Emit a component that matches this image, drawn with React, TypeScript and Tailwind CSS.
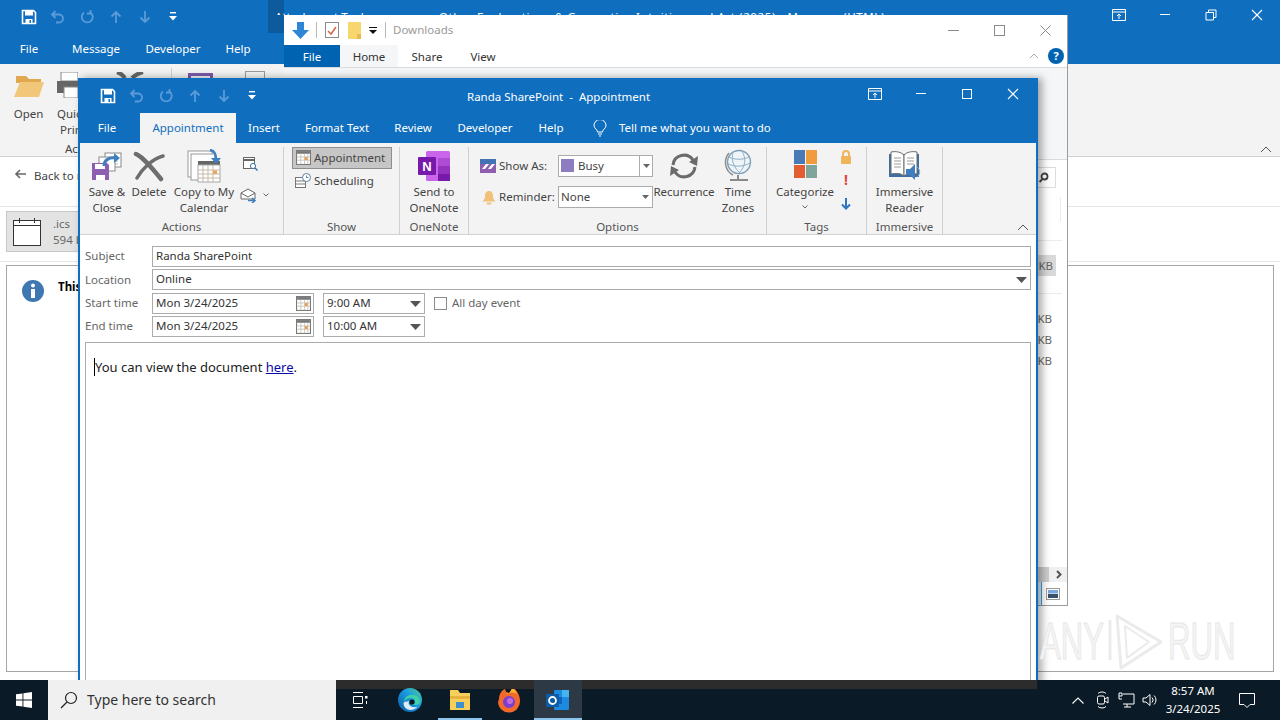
import type { ReactNode } from "react";

const BLUE = "bg-[#106ebe]";

function SaveIcon() {
  return (
    <svg width="16" height="16" viewBox="0 0 16 16">
      <path d="M1.5 1.5h11l2 2v11h-13z" fill="none" stroke="#fff" strokeWidth="1.6" />
      <rect x="4" y="2" width="8" height="4.5" fill="#fff" />
      <rect x="4.5" y="10" width="7" height="4.5" fill="#fff" />
      <rect x="8.5" y="11" width="1.5" height="3" fill="#106ebe" />
    </svg>
  );
}

function QuickAccess() {
  const faded = "#5a9bd8";
  return (
    <div className="flex items-center">
      <span className="flex w-[29px] justify-center"><SaveIcon /></span>
      <span className="flex w-[29px] justify-center">
        <svg width="16" height="16" viewBox="0 0 16 16" fill="none" stroke={faded} strokeWidth="1.8">
          <path d="M5.5 2 2 5.5 5.5 9M2 5.5h7a4 4 0 0 1 4 4 4 4 0 0 1-4 4H6" />
        </svg>
      </span>
      <span className="flex w-[29px] justify-center">
        <svg width="16" height="16" viewBox="0 0 16 16" fill="none" stroke={faded} strokeWidth="1.8">
          <path d="M11.5 3.5a5.5 5.5 0 1 1-6.5 0M11.5 1v3.5H8" />
        </svg>
      </span>
      <span className="flex w-[29px] justify-center">
        <svg width="14" height="14" viewBox="0 0 14 14" fill="none" stroke={faded} strokeWidth="1.8">
          <path d="M7 13V2M2.5 6.5 7 2l4.5 4.5" />
        </svg>
      </span>
      <span className="flex w-[29px] justify-center">
        <svg width="14" height="14" viewBox="0 0 14 14" fill="none" stroke={faded} strokeWidth="1.8">
          <path d="M7 1v11M2.5 7.5 7 12l4.5-4.5" />
        </svg>
      </span>
      <span className="flex w-[28px] justify-center">
        <svg width="8" height="9" viewBox="0 0 8 9" fill="#fff">
          <rect x="1" y="0" width="6" height="1.4" />
          <path d="M0 4h8L4 8.5z" />
        </svg>
      </span>
    </div>
  );
}

function WindowButtons({ max }: { max: "square" | "restore" }) {
  return (
    <div className="flex items-center">
      <span className="flex w-[46px] justify-center">
        <svg width="14" height="12" viewBox="0 0 14 12" fill="none" stroke="#fff" strokeWidth="1">
          <path d="M.5.5h13v11H.5zM.5 3h13M7 10V5M5 7l2-2 2 2" />
        </svg>
      </span>
      <span className="flex w-[46px] justify-center">
        <svg width="12" height="12" viewBox="0 0 12 12" stroke="#fff"><path d="M1 5.500h10" /></svg>
      </span>
      <span className="flex w-[46px] justify-center">
        {max === "square" ? (
          <svg width="12" height="12" viewBox="0 0 12 12" fill="none" stroke="#fff"><rect x="1.5" y="1.5" width="9" height="9" /></svg>
        ) : (
          <svg width="12" height="12" viewBox="0 0 12 12" fill="none" stroke="#fff"><path d="M1 3.5h7.5V11H1zM3.5 3.5V1H11v7.5H8.5" /></svg>
        )}
      </span>
      <span className="flex w-[46px] justify-center">
        <svg width="12" height="12" viewBox="0 0 12 12" stroke="#fff" strokeWidth="1.1"><path d="m1 1 10 10M11 1 1 11" /></svg>
      </span>
    </div>
  );
}

function CalendarGrid({ size = 14 }: { size?: number }) {
  return (
    <svg width={size} height={size} viewBox="0 0 14 14">
      <rect x=".5" y=".5" width="13" height="13" fill="#fff" stroke="#7a7a7a" />
      <rect x="1" y="1" width="12" height="2.5" fill="#777" />
      <path d="M1 6.5h12M1 9.5h12M4.5 4v9M8 4v9M11 4v9" stroke="#c9c0b5" strokeWidth=".8" />
      <rect x="8.2" y="6.7" width="2.6" height="2.6" fill="#e89a4c" />
    </svg>
  );
}

function BigButton({ icon, lines, width }: { icon: ReactNode; lines: string[]; width: string }) {
  return (
    <div className={`flex flex-col items-center ${width}`}>
      <div className="flex h-[37px] items-center justify-center">{icon}</div>
      {lines.map((l) => (
        <span key={l} className="whitespace-nowrap text-[11.5px] leading-[16px]">{l}</span>
      ))}
    </div>
  );
}

function Group({ label, width, children }: { label: string; width: string; children: ReactNode }) {
  return (
    <div className={`flex h-[88px] shrink-0 flex-col border-r border-[#cfcfcf] ${width}`}>
      <div className="h-[71px] flex-1">{children}</div>
      <div className="text-center text-[11.5px] leading-[16px] text-[#555]">{label}</div>
    </div>
  );
}

function SaveCloseIcon() {
  return (
    <svg width="32" height="32" viewBox="0 0 32 32">
      <rect x="14" y="3" width="16" height="14" fill="#fff" stroke="#8a8a8a" />
      <path d="M17 11h10M17 14h10" stroke="#bbb" />
      <rect x="8" y="7" width="16" height="14" fill="#fff" stroke="#8a8a8a" />
      <path d="M1 13h15l2 2v15H1z" fill="#8e5fb0" />
      <rect x="5" y="25" width="9" height="5" fill="#fff" />
      <rect x="4" y="14" width="10" height="5" fill="#fff" />
      <path d="M13 16c0-6 5-9 12-8" fill="none" stroke="#3f7fc0" strokeWidth="3" />
      <path d="m23 3 6 5-6 5z" fill="#3f7fc0" />
    </svg>
  );
}

function DeleteIcon() {
  return (
    <svg width="32" height="32" viewBox="0 0 32 32" fill="none" stroke="#6d6d6d" strokeLinecap="round">
      <path d="M3 4c7 3 16 14 25 25" strokeWidth="4.5" />
      <path d="M30 6C19 9 9 19 4 28" strokeWidth="3.5" />
    </svg>
  );
}

function CopyCalendarIcon() {
  return (
    <svg width="34" height="34" viewBox="0 0 34 34">
      <rect x="1" y="2" width="24" height="26" fill="#fff" stroke="#9a9a9a" />
      <rect x="4" y="5" width="24" height="26" fill="#fff" stroke="#9a9a9a" />
      <rect x="11" y="12" width="22" height="4" fill="#666" />
      <rect x="11" y="16" width="22" height="17" fill="#fff" stroke="#a8a8a8" />
      <path d="M11 21h22M11 25h22M11 29h22M16 16v17M21 16v17M26 16v17" stroke="#c7b9a8" />
      <rect x="26" y="21.5" width="4" height="3.5" fill="#eca35c" />
      <path d="M23 1c5 1 6 4 6 9" fill="none" stroke="#3f7fc0" strokeWidth="2.6" />
      <path d="m24 9 5 6 5-6z" fill="#3f7fc0" />
    </svg>
  );
}

function OneNoteIcon() {
  return (
    <svg width="33" height="32" viewBox="0 0 33 32">
      <rect x="8" y="1" width="24" height="30" rx="1.5" fill="#ca64ea" />
      <rect x="20" y="8" width="12" height="8" fill="#ae4bd5" />
      <rect x="20" y="16" width="12" height="8" fill="#9332bf" />
      <rect x="20" y="24" width="12" height="7" fill="#7719aa" />
      <rect x="0" y="7" width="18" height="18" rx="1" fill="#7719aa" />
      <text x="9" y="21" textAnchor="middle" fill="#fff" fontSize="13" fontWeight="700" fontFamily="Liberation Sans, sans-serif">N</text>
    </svg>
  );
}

function GlobeIcon() {
  return (
    <svg width="28" height="34" viewBox="0 0 28 34" fill="none">
      <circle cx="15" cy="13" r="11.5" fill="#eef4f8" stroke="#7d9db5" strokeWidth="1.4" />
      <path d="M5 8c6 3 14 3 20 0M4 15c7 3 15 3 22-1M9 3c-2 7 0 15 7 21M18 2c4 7 4 14-2 21" stroke="#8fb0c6" />
      <path d="M5 4C-1 11 1 22 9 26" stroke="#8a8a8a" strokeWidth="1.4" />
      <path d="M14 26v4M6 31h18" stroke="#8a8a8a" strokeWidth="2" />
    </svg>
  );
}

function RecurrenceIcon() {
  return (
    <svg width="32" height="32" viewBox="0 0 32 32" fill="none" stroke="#6b6b6b" strokeWidth="3">
      <path d="M5 15a11 11 0 0 1 20-5" />
      <path d="M27 17a11 11 0 0 1-20 5" />
      <path d="m30 6-1 10-8-4z" fill="#6b6b6b" stroke="none" />
      <path d="m2 26 1-10 8 4z" fill="#6b6b6b" stroke="none" />
    </svg>
  );
}

function BookIcon() {
  return (
    <svg width="33" height="31" viewBox="0 0 33 31">
      <path d="M1 4h30v23H1z" fill="#3f6f9f" />
      <path d="M3 2c5-1 10 0 13 3v21c-3-3-8-3-13-2z" fill="#fff" stroke="#6a6a6a" />
      <path d="M29 2c-5-1-10 0-13 3v21c3-3 8-3 13-2z" fill="#fff" stroke="#6a6a6a" />
      <path d="M6 8h7M6 11h7M6 14h7M6 17h7M19 8h7M19 11h7M19 14h7" stroke="#9a9a9a" />
      <path d="M18 19h4l5-5v16l-5-5h-4z" fill="#3f7fc0" />
      <path d="M29 17a6 6 0 0 1 0 10" fill="none" stroke="#7aa5cf" />
    </svg>
  );
}

function Select({ children, boxed }: { children: ReactNode; boxed?: boolean }) {
  return (
    <div className="flex h-[22px] w-[95px] items-center border border-[#ababab] bg-white text-[11.5px]">
      <div className="flex flex-1 items-center gap-[4px] pb-[1px] pl-[2px]">{children}</div>
      <div className={`flex h-full w-[13px] items-center justify-center ${boxed ? "border-l border-[#ababab]" : ""}`}>
        <svg width="7" height="4" viewBox="0 0 7 4" fill="#666"><path d="M0 0h7L3.5 4z" /></svg>
      </div>
    </div>
  );
}

function AppointmentRibbon() {
  return (
    <div className="relative flex h-[92px] items-start border-b border-[#d2d2d2] bg-[#f3f3f3] pt-[4px] text-[#444]">
      <Group label="Actions" width="w-[204px]">
        <div className="flex pl-[7px]">
          <BigButton width="w-[40px]" lines={["Save &", "Close"]} icon={<SaveCloseIcon />} />
          <div className="w-[2px]" />
          <BigButton width="w-[40px]" lines={["Delete"]} icon={<DeleteIcon />} />
          <div className="w-[2px]" />
          <BigButton width="w-[66px]" lines={["Copy to My", "Calendar"]} icon={<CopyCalendarIcon />} />
          <div className="flex flex-col gap-[16px] pl-[3px] pt-[9px]">
            <svg className="ml-[3px]" width="15" height="15" viewBox="0 0 15 15" fill="none" stroke="#666">
              <rect x=".5" y="1.5" width="11" height="11" fill="#fff" />
              <path d="M.5 4h11" strokeWidth="2" />
              <circle cx="10" cy="10" r="2.6" fill="#fff" stroke="#3f6f9f" />
              <path d="m12 12 2.5 2.5" stroke="#3f6f9f" strokeWidth="1.4" />
            </svg>
            <div className="flex items-center gap-[6px]">
              <svg width="17" height="16" viewBox="0 0 17 16" fill="none">
                <path d="M1 6l7-4 7 4v6H1z" fill="#fff" stroke="#666" />
                <path d="m1 6 7 4 7-4" stroke="#666" />
                <path d="M8 13.5h7M12 11l3 2.5-3 2.5" stroke="#3f7fc0" strokeWidth="1.6" />
              </svg>
              <svg width="6" height="4" viewBox="0 0 6 4" fill="none" stroke="#666"><path d="m.5.5 2.5 2.5L5.500.5" /></svg>
            </div>
          </div>
        </div>
      </Group>

      <Group label="Show" width="w-[116px]">
        <div className="flex flex-col gap-[1px] pl-[8px]">
          <div className="flex h-[22px] w-[100px] items-center gap-[3px] border border-[#8e8e8e] bg-[#c6c6c6] pb-[1px] pl-[3px] text-[11.5px]">
            <CalendarGrid size={15} />
            Appointment
          </div>
          <div className="flex h-[22px] items-center gap-[3px] pb-[1px] pl-[3px] text-[11.5px]">
            <svg width="16" height="16" viewBox="0 0 16 16" fill="none">
              <rect x=".5" y="4.5" width="10" height="10" fill="#fff" stroke="#777" />
              <path d="M1 8h9M1 11h9" stroke="#777" />
              <circle cx="11.5" cy="4.5" r="4" fill="#fff" stroke="#5a7fa5" />
              <path d="M11.5 2.5v2h2" stroke="#5a7fa5" />
            </svg>
            Scheduling
          </div>
        </div>
      </Group>

      <Group label="OneNote" width="w-[69px]">
        <BigButton width="w-full" lines={["Send to", "OneNote"]} icon={<OneNoteIcon />} />
      </Group>

      <Group label="Options" width="w-[298px]">
        <div className="flex">
          <div className="flex w-[185px] flex-col gap-[9px] pt-[8px]">
            <div className="flex items-center">
              <svg className="ml-[11px]" width="16" height="14" viewBox="0 0 16 14">
                <rect width="16" height="14" fill="#fff" />
                <rect y="0" width="16" height="5" fill="#4472b5" />
                <path d="M0 5h16v9H0z" fill="#8e5fb0" />
                <path d="M2 10l4-5h3l-4 5zM8 10l4-5h3l-4 5z" fill="#fff" />
              </svg>
              <span className="w-[62px] pl-[3px] text-[11.5px]">Show As:</span>
              <Select boxed>
                <span className="h-[13px] w-[13px] bg-[#8e7cc3]" />
                Busy
              </Select>
            </div>
            <div className="flex items-center">
              <svg className="ml-[13px]" width="14" height="15" viewBox="0 0 14 15">
                <path d="M7 1c3 0 4 2.500 4 5s1 4 2.500 5.500H.5C2 10 3 8.500 3 6s1-5 4-5z" fill="#f2c078" />
                <rect x="4.500" y="12.500" width="5" height="2" rx="1" fill="#f2c078" />
              </svg>
              <span className="w-[62px] pl-[3px] text-[11.5px]">Reminder:</span>
              <Select>None</Select>
            </div>
          </div>
          <BigButton width="w-[60px]" lines={["Recurrence"]} icon={<RecurrenceIcon />} />
          <BigButton width="w-[48px]" lines={["Time", "Zones"]} icon={<GlobeIcon />} />
        </div>
      </Group>

      <Group label="Tags" width="w-[100px]">
        <div className="flex">
          <div className="flex w-[76px] flex-col items-center">
            <div className="mt-[3px] grid h-[28px] w-[23px] grid-cols-2 gap-[1px] overflow-hidden">
              <span className="bg-[#4a7ab5]" />
              <span className="bg-[#ef9b3e]" />
              <span className="bg-[#e35d33]" />
              <span className="bg-[#7fa59a]" />
            </div>
            <div className="mt-[6px] whitespace-nowrap text-[11.5px] leading-[16px]">Categorize</div>
            <svg className="mt-[5px]" width="6" height="4" viewBox="0 0 6 4" fill="none" stroke="#666"><path d="m.5.5 2.500 2.500L5.500.5" /></svg>
          </div>
          <div className="-ml-[3px] flex flex-col items-center gap-[9px] pt-[3px]">
            <svg width="12" height="14" viewBox="0 0 12 14">
              <path d="M3 6V4a3 3 0 0 1 6 0v2" fill="none" stroke="#f0b45a" strokeWidth="2" />
              <rect x="1" y="6" width="10" height="8" rx="1" fill="#f0b45a" />
            </svg>
            <span className="text-[14px] font-bold leading-[14px] text-[#e0453a]">!</span>
            <svg className="mt-[2px]" width="10" height="12" viewBox="0 0 10 12" fill="none" stroke="#2f74c0" strokeWidth="2"><path d="M5 0v10M1 6.500 5 10.500 9 6.500" /></svg>
          </div>
        </div>
      </Group>

      <Group label="Immersive" width="w-[76px]">
        <BigButton width="w-full" lines={["Immersive", "Reader"]} icon={<BookIcon />} />
      </Group>

      <svg className="absolute bottom-[3px] right-[7px]" width="12" height="7" viewBox="0 0 12 7" fill="none" stroke="#555"><path d="m1 6 5-5 5 5" /></svg>
    </div>
  );
}

function DateField({ value }: { value: string }) {
  return (
    <div className="flex h-[21px] w-[162px] items-center justify-between border border-[#ababab] bg-white pl-[3px] pr-[2px]">
      <span className="-mt-[2px]">{value}</span>
      <CalendarGrid size={15} />
    </div>
  );
}

function TimeField({ value }: { value: string }) {
  return (
    <div className="flex h-[21px] w-[102px] items-center justify-between border border-[#ababab] bg-white pl-[3px] pr-[3px]">
      <span className="-mt-[2px]">{value}</span>
      <svg width="11" height="6" viewBox="0 0 11 6" fill="#555"><path d="M0 0h11L5.500 6z" /></svg>
    </div>
  );
}

function AppointmentWindow() {
  return (
    <div className="absolute left-[78px] top-[78px] flex h-[642px] w-[960px] flex-col border-x-2 border-[#106ebe] bg-white shadow-[4px_0_8px_rgba(0,0,0,0.35)]">
      <div className={`flex h-[35px] items-center justify-between pl-[13px] ${BLUE}`}>
        <QuickAccess />
        <span className="absolute left-[387px] top-[11px] whitespace-pre text-[11.5px] leading-[16px] text-white">Randa SharePoint  -  Appointment</span>
        <div className="-mt-[4px]"><WindowButtons max="square" /></div>
      </div>
      <div className={`flex h-[30px] items-end text-[11.5px] text-white ${BLUE}`}>
        <span className="flex h-full w-[60px] items-center justify-center pr-[6px]">File</span>
        <span className="flex h-full w-[96px] items-center justify-center bg-[#f3f3f3] text-[#106ebe]">Appointment</span>
        <span className="flex h-full w-[56px] items-center justify-center">Insert</span>
        <span className="flex h-full w-[90px] items-center justify-center">Format Text</span>
        <span className="flex h-full w-[62px] items-center justify-center">Review</span>
        <span className="flex h-full w-[82px] items-center justify-center">Developer</span>
        <span className="flex h-full w-[50px] items-center justify-center">Help</span>
        <span className="flex h-full items-center gap-[12px] pl-[17px]">
          <svg width="14" height="17" viewBox="0 0 14 17" fill="none" stroke="#fff">
            <path d="M4.500 12c0-2.500-3.500-3.500-3.500-6.500a6 6 0 0 1 12 0c0 3-3.500 4-3.500 6.500zM5 14h4M6 16h2" />
          </svg>
          Tell me what you want to do
        </span>
      </div>

      <AppointmentRibbon />

      <div className="flex flex-col gap-[2px] pl-[5px] pr-[5px] pt-[11px] text-[11.5px] text-[#333]">
        <div className="flex h-[21px] items-center">
          <span className="-mt-[2px] w-[67px] text-[#666]">Subject</span>
          <div className="flex h-full flex-1 items-center border border-[#ababab] pb-[2px] pl-[3px]">Randa SharePoint</div>
        </div>
        <div className="flex h-[21px] items-center">
          <span className="w-[67px] text-[#666]">Location</span>
          <div className="flex h-full flex-1 items-center justify-between border border-[#ababab] pl-[3px] pr-[3px]">
            <span className="-mt-[2px]">Online</span>
            <svg width="11" height="6" viewBox="0 0 11 6" fill="#555"><path d="M0 0h11L5.500 6z" /></svg>
          </div>
        </div>
        <div className="mt-[1px] flex h-[21px] items-center">
          <span className="-mt-[2px] w-[67px] text-[#666]">Start time</span>
          <DateField value="Mon 3/24/2025" />
          <div className="w-[9px]" />
          <TimeField value="9:00 AM" />
          <span className="ml-[9px] h-[13px] w-[13px] border border-[#8a8a8a] bg-white" />
          <span className="-mt-[2px] ml-[5px] text-[#666]">All day event</span>
        </div>
        <div className="flex h-[21px] items-center">
          <span className="-mt-[2px] w-[67px] text-[#666]">End time</span>
          <DateField value="Mon 3/24/2025" />
          <div className="w-[9px]" />
          <TimeField value="10:00 AM" />
        </div>
      </div>

      <div className="mx-[5px] mt-[5px] flex-1 border border-[#ababab] pl-[8px] pt-[13px] text-[13px] leading-[22px] text-[#222]">
        <span className="border-l border-black">You can view the document </span>
        <span className="text-[#0a0aa8] underline">here</span>.
      </div>
    </div>
  );
}

function ExplorerWindow() {
  return (
    <div className="absolute left-[284px] top-[15px] flex h-[591px] w-[784px] flex-col border-b border-r border-[#9b9b9b] bg-white">
      <div className="flex h-[30px] shrink-0 items-center bg-white pl-[8px] pr-[16px]">
        <svg width="17" height="17" viewBox="0 0 17 17" fill="#2f86d6"><path d="M5 0h7v8h5l-8.500 9L0 8h5z" /></svg>
        <span className="ml-[7px] h-[16px] w-px bg-[#b8b8b8]" />
        <svg className="ml-[8px]" width="14" height="16" viewBox="0 0 14 16" fill="none">
          <rect x=".5" y=".5" width="13" height="15" fill="#fff" stroke="#8a8a8a" />
          <path d="m3 9 3 3 5-7" stroke="#d9634a" strokeWidth="1.5" />
        </svg>
        <svg className="ml-[9px]" width="13" height="17" viewBox="0 0 13 17"><rect width="13" height="17" fill="#f8d66e" /><rect x="9" y="12" width="4" height="5" fill="#eab94a" /></svg>
        <svg className="ml-[8px]" width="8" height="7" viewBox="0 0 8 7" fill="#111"><rect width="8" height="1" /><path d="M0 3h8L4 7z" /></svg>
        <span className="ml-[8px] h-[16px] w-px bg-[#b8b8b8]" />
        <span className="ml-[7px] text-[11.5px] text-[#9a9a9a]">Downloads</span>
        <div className="ml-auto flex items-center gap-[35px]">
          <svg width="11" height="11" viewBox="0 0 11 11" stroke="#8a8a8a"><path d="M0 5.500h11" /></svg>
          <svg width="11" height="11" viewBox="0 0 11 11" fill="none" stroke="#8a8a8a"><rect x=".5" y=".5" width="10" height="10" /></svg>
          <svg width="11" height="11" viewBox="0 0 11 11" stroke="#8a8a8a"><path d="m.5.5 10 10M10.500.5l-10 10" /></svg>
        </div>
      </div>
      <div className="flex h-[23px] shrink-0 items-stretch border-b border-[#dadbdc] pr-[3px] text-[11.5px] text-[#333]">
        <span className="flex w-[56px] items-center justify-center bg-[#0063b1] pt-[2px] text-white">File</span>
        <span className="flex w-[58px] items-center justify-center bg-[#f5f6f7] pt-[2px]">Home</span>
        <span className="flex w-[58px] items-center justify-center pt-[2px]">Share</span>
        <span className="flex w-[54px] items-center justify-center pt-[2px]">View</span>
        <svg className="my-auto ml-auto" width="10" height="6" viewBox="0 0 10 6" fill="none" stroke="#aaa"><path d="m1 5 4-4 4 4" /></svg>
        <span className="my-auto ml-[9px] flex h-[16px] w-[16px] items-center justify-center rounded-full bg-[#0063b1] text-[11px] font-bold text-white">?</span>
      </div>
      <div className="h-[92px] shrink-0 border-b border-[#dadbdc] bg-[#f5f6f7]" />
      <div className="flex-1 bg-white" />
    </div>
  );
}

function ExplorerRightEdge() {
  return (
    <div className="absolute left-[1038px] top-[160px] flex h-[445px] w-[29px] flex-col text-[11.5px] text-[#666]">
      <div className="mt-[7px] flex h-[21px] w-[18px] items-center overflow-hidden border border-l-0 border-[#dcdcdc]">
        <svg width="11" height="11" viewBox="0 0 11 11" fill="none" stroke="#444" strokeWidth="1.8"><circle cx="6.500" cy="4.500" r="3" /><path d="m4.500 7-3 3" /></svg>
      </div>
      <span className="absolute left-[22px] top-[37px] h-[25px] w-px bg-[#ececec]" />
      <span className="absolute left-0 top-[80px] h-px w-[24px] bg-[#ececec]" />
      <span className="absolute left-0 top-[133px] h-px w-[24px] bg-[#ececec]" />
      <div className="mt-[67px] flex h-[21px] w-[18px] items-center justify-end bg-[#d9d9d9] pr-[3px]">KB</div>
      <div className="mt-[34px] flex w-[14px] flex-col items-end gap-[4px] leading-[17px]">
        <span>KB</span>
        <span>KB</span>
        <span>KB</span>
      </div>
      <div className="mt-auto flex h-[15px] items-center bg-[#f0f0f0]">
        <span className="h-full w-[11px] bg-[#cdcdcd]" />
        <svg className="ml-[7px]" width="7" height="9" viewBox="0 0 7 9" fill="none" stroke="#555" strokeWidth="2"><path d="m1 1 3.500 3.500L1 8" /></svg>
      </div>
      <div className="flex h-[23px] items-center gap-[4px]">
        <span className="h-full w-[4px] border-r border-[#4a9bd9] bg-[#d7ecfb]" />
        <svg width="14" height="12" viewBox="0 0 14 12">
          <rect x=".5" y=".5" width="13" height="11" fill="#fff" stroke="#9a9a9a" />
          <rect x="2" y="2" width="10" height="3.500" fill="#7aa7e0" />
          <rect x="2" y="6" width="10" height="4" fill="#39506b" />
        </svg>
      </div>
    </div>
  );
}

function OutlookWindow() {
  return (
    <div className="relative flex h-[680px] flex-col bg-white">
      <div className={`relative h-[64px] shrink-0 ${BLUE}`}>
        <div className="flex h-[33px] items-center pl-[14px]"><QuickAccess /></div>
        <div className="flex h-[31px] items-center text-[11.5px] text-white">
          <span className="w-[58px] text-center">File</span>
          <span className="w-[76px] text-center">Message</span>
          <span className="w-[78px] text-center">Developer</span>
          <span className="w-[52px] text-center">Help</span>
        </div>
        <div className="absolute left-[268px] top-0 h-[33px] w-[16px] bg-[#0d5a9c]" />
        <div className="absolute left-[275px] top-0 h-[15px] overflow-hidden whitespace-nowrap pt-[9px] text-[11.5px] leading-[16px] text-white">Attachment Tools</div>
        <div className="absolute left-[439px] top-0 h-[15px] overflow-hidden whitespace-nowrap pt-[9px] text-[11.5px] leading-[16px] tracking-[0.6px] text-white">Other Explorations &amp; Generative Intuition and Art (2025) - Message (HTML)</div>
        <div className="absolute right-0 top-[9px]"><WindowButtons max="restore" /></div>
      </div>

      <div className="relative flex h-[93px] shrink-0 border-b border-[#d2d2d2] bg-[#f3f3f3] text-[11.5px] text-[#444]">
        <div className="flex w-[57px] flex-col items-center pt-[8px]">
          <svg width="32" height="26" viewBox="0 0 32 26"><path d="M3 4h10l3 3h12v4H3z" fill="#e0a94f" /><path d="M7 10h24l-5 15H1z" fill="#f3c779" /></svg>
          <span className="mt-[8px] leading-[16px]">Open</span>
        </div>
        <div className="flex w-[21px] flex-col pt-[8px]">
          <svg className="shrink-0" width="21" height="26" viewBox="0 0 21 26"><rect x="4" y="0" width="17" height="9" fill="#fff" stroke="#888" /><rect x="0" y="9" width="21" height="12" fill="#666" /><rect x="7" y="15" width="14" height="11" fill="#fff" stroke="#888" /></svg>
          <span className="mt-[8px] overflow-hidden whitespace-nowrap leading-[16px]">Quick</span>
          <span className="overflow-hidden whitespace-nowrap pl-[3px] leading-[16px]">Print</span>
        </div>
        <span className="absolute bottom-[-1px] left-[65px] w-[13px] overflow-hidden whitespace-nowrap leading-[16px]">Actions</span>
        {/* tops of the ribbon buttons that stick out above the appointment window */}
        <svg className="absolute left-[116px] top-[8px]" width="28" height="6" viewBox="0 0 28 6" fill="none" stroke="#666" strokeWidth="4"><path d="M1 0c3 1 6 3 8 6M27 0c-4 1-8 3-11 6" /></svg>
        <span className="absolute left-[171px] top-[4px] h-[10px] w-px bg-[#cfcfcf]" />
        <span className="absolute left-[188px] top-[9px] h-[5px] w-[25px] border-x-[3px] border-t-[3px] border-[#7d5aa8]" />
        <span className="absolute left-[245px] top-[7px] h-[7px] w-[20px] border-x border-t border-[#9a9a9a]" />
        <svg className="absolute bottom-[3px] right-[8px]" width="12" height="7" viewBox="0 0 12 7" fill="none" stroke="#555"><path d="m1 6 5-5 5 5" /></svg>
      </div>

      <div className="flex h-[50px] shrink-0 items-start border-b border-[#e5e5e5] pl-[14px] pt-[10px] text-[11.5px] text-[#444]">
        <svg className="mt-[2px]" width="12" height="10" viewBox="0 0 12 10" fill="none" stroke="#666" strokeWidth="1.6"><path d="M12 5H2M6 1 2 5l4 4" /></svg>
        <span className="ml-[8px] w-[44px] overflow-hidden whitespace-nowrap">Back to message</span>
      </div>

      <div className="flex h-[55px] shrink-0 items-start border-b border-[#e8e8e8] pl-[6px] pt-[4px]">
        <div className="flex h-[41px] w-[72px] items-center overflow-hidden border border-r-0 border-[#c8c8c8] bg-[#e3e3e3] pl-[6px] text-[11.5px] text-[#666]">
          <svg className="shrink-0" width="28" height="29" viewBox="0 0 28 29" fill="#fff" stroke="#333">
            <rect x=".5" y="3.500" width="27" height="25" />
            <path d="M.5 8.500h27M6.500 1v5M21.500 1v5" fill="none" />
          </svg>
          <div className="ml-[12px] flex flex-col whitespace-nowrap pt-[1px] leading-[16px]">
            <span>.ics</span>
            <span>594 bytes</span>
          </div>
        </div>
      </div>

      <div className="mx-[6px] mb-[8px] mt-[3px] flex flex-1 items-start border border-[#a6a6a6] pl-[14px] pt-[13px] text-[11.5px]">
        <svg width="24" height="24" viewBox="0 0 24 24">
          <circle cx="12" cy="12" r="11" fill="#3f77b0" />
          <circle cx="12" cy="6.500" r="2" fill="#fff" />
          <rect x="10" y="10" width="4" height="9" fill="#fff" />
        </svg>
        <span className="-mt-[1px] ml-[13px] w-[20px] overflow-hidden whitespace-nowrap font-bold text-black">This item</span>
      </div>
    </div>
  );
}

function Taskbar() {
  return (
    <div className="relative flex h-[40px] items-stretch bg-[#0a1a26] text-white">
      <div className="flex w-[48px] items-center justify-center">
        <svg width="16" height="16" viewBox="0 0 16 16" fill="#fff">
          <path d="M0 2.300 6.500 1.400v6.200H0zM7.400 1.300 16 0v7.600H7.400zM0 8.400h6.500v6.200L0 13.700zM7.400 8.400H16V16l-8.600-1.300z" />
        </svg>
      </div>
      <div className="flex w-[288px] items-center bg-[#f0f0f0] pl-[12px] text-[14px] text-[#333]">
        <svg width="18" height="18" viewBox="0 0 18 18" fill="none" stroke="#222" strokeWidth="1.2"><circle cx="11" cy="7" r="5.500" /><path d="M7 11 1 17" /></svg>
        <span className="-mt-[2px] ml-[9px]">Type here to search</span>
      </div>
      <div className="relative flex flex-1 items-stretch">
        <div className="absolute left-0 top-0 h-[9px] w-[701px] bg-[#2c2c2c]" />
        <div className="flex w-[48px] items-center justify-center">
          <svg width="16" height="16" viewBox="0 0 16 16" fill="none" stroke="#fff"><path d="M1 .5h10M1 15.500h10M1.500 4.500h9v7h-9z" /><rect x="13" y="4" width="2.500" height="2.500" fill="#fff" stroke="none" /><path d="M14.500 9v3" /></svg>
        </div>
        <div className="flex w-[52px] items-center justify-center">
          <svg className="relative" width="24" height="24" viewBox="0 0 24 24">
            <defs>
              <linearGradient id="edge" x1="0" y1="1" x2="1" y2="0">
                <stop offset="0" stopColor="#0c59a4" />
                <stop offset="0.6" stopColor="#1b9de2" />
                <stop offset="1" stopColor="#4fd28a" />
              </linearGradient>
            </defs>
            <circle cx="12" cy="12" r="12" fill="url(#edge)" />
            <path d="M6 14c0-5 5-8 10-7 4 1 6 4 6 7 0 2-2 3-5 3-1.500 0-2.500-.5-3-1 2 0 3-1 3-2.500C17 11 15 10 12.500 10 9 10 7 12 6 14z" fill="#3fd0a8" />
            <path d="M5.500 15c0 4 3 7 7 7 3 0 5.500-1.500 7-3.500-2 1-5 1-7-.5-2-1.500-2.500-3-1-5-3 .5-5.500 1-6 2z" fill="#fff" opacity=".85" />
            <circle cx="14" cy="14" r="2.600" fill="#0b1a27" />
          </svg>
        </div>
        <div className="relative flex w-[48px] items-center justify-center">
          <svg width="22" height="22" viewBox="0 0 22 22">
            <path d="M1 1h8l2 3h10v17H1z" fill="#f7cf5b" />
            <rect x="1" y="7" width="20" height="3" fill="#e8b23e" />
            <rect x="7" y="13" width="8" height="6" fill="#3f8fd0" />
          </svg>
          <span className="absolute bottom-0 left-[2px] right-[2px] h-[2px] bg-[#8cc4ee]" />
        </div>
        <div className="flex w-[50px] items-center justify-center">
          <svg width="24" height="26" viewBox="0 0 24 26">
            <path d="M2 12C2 7 5 3 8 2c0 3 2 4 4 4 2-2 3-4 3-6 5 3 8 8 8 14a11 11 0 0 1-22 1z" fill="#f2692a" />
            <path d="M8 2c0 3 2 4 4 4 2-2 3-4 3-6 2 2 4 4 5 7-3-2-7-2-10 0z" fill="#fbb32a" />
            <circle cx="12" cy="15" r="6" fill="#7a3fd0" />
            <circle cx="13" cy="14" r="3" fill="#c46bd8" />
          </svg>
        </div>
        <div className="relative flex w-[48px] items-center justify-center bg-[#2d3945]">
          <svg width="24" height="22" viewBox="0 0 24 22">
            <rect x="8" y="1" width="15" height="20" rx="1" fill="#1c8adf" />
            <rect x="16" y="1" width="7" height="7" fill="#47b4f2" />
            <rect x="8" y="8" width="8" height="7" fill="#1064b8" />
            <rect x="0" y="5" width="13" height="13" rx="1" fill="#0a5ba8" />
            <circle cx="6.500" cy="11.500" r="3.500" fill="none" stroke="#fff" strokeWidth="1.800" />
          </svg>
          <span className="absolute bottom-0 left-0 right-0 h-[2px] bg-[#8cc4ee]" />
        </div>
      </div>
      <div className="flex items-center pr-[14px]">
        <svg width="12" height="7" viewBox="0 0 12 7" fill="none" stroke="#fff" strokeWidth="1.1"><path d="m.5 6.500 5.500-5.500 5.500 5.500" /></svg>
        <svg className="ml-[12px]" width="13" height="18" viewBox="0 0 13 18" fill="none" stroke="#fff"><rect x="1.500" y="5" width="7" height="8" rx="1.500" /><path d="m9 8 3-2v6l-3-2M2 2.500c2-2 6-2 8 0M2 15.500c2 2 6 2 8 0" /></svg>
        <svg className="ml-[9px]" width="17" height="16" viewBox="0 0 17 16" fill="none" stroke="#fff"><path d="M5 2h11v10H5M9 12v3M6 15h7M1 1h3v3H1zM1 4v3h3" /></svg>
        <svg className="ml-[7px]" width="16" height="16" viewBox="0 0 16 16" fill="none" stroke="#fff"><path d="M1 6v4h3l4 3.500v-11L4 6zM10 5.500a3.500 3.500 0 0 1 0 5M12 3.500a6 6 0 0 1 0 9" /></svg>
        <div className="flex w-[70px] flex-col items-center text-[11.5px] leading-[18px]">
          <span>8:57 AM</span>
          <span>3/24/2025</span>
        </div>
        <div className="flex w-[38px] items-center justify-center">
          <svg width="16" height="15" viewBox="0 0 16 15" fill="none" stroke="#fff"><path d="M.5.500h15v11h-4.500l-3 3-3-3H.5z" /></svg>
        </div>
      </div>
    </div>
  );
}

function Watermark() {
  const letters = "inline-block origin-left scale-x-[0.6] whitespace-nowrap text-[#f4f4f4] [-webkit-text-stroke:1px_#e6e6e6]";
  return (
    <div className="pointer-events-none absolute left-[1040px] top-[610px] z-20 flex h-[62px] w-[195px] items-center font-['Liberation_Sans',sans-serif] text-[52px] leading-[62px]">
      <span className="w-[67px]"><span className={letters}>ANY</span></span>
      <svg className="shrink-0" width="58" height="62" viewBox="0 0 58 62" fill="none" stroke="#ebebeb" strokeLinejoin="round">
        <path d="M10 6 54 32 14 58z" strokeWidth="3" />
        <path d="M18 16 42 32 20 48z" strokeWidth="2" />
        <path d="M3 10v40" strokeWidth="3" />
      </svg>
      <span className="ml-[3px] w-[63px]"><span className={letters}>RUN</span></span>
    </div>
  );
}

export default function App() {
  return (
    <div className="relative flex h-[720px] w-[1280px] flex-col overflow-hidden font-['Noto_Sans',sans-serif]">
      <OutlookWindow />
      <ExplorerWindow />
      <ExplorerRightEdge />
      <AppointmentWindow />
      <div className="relative z-10"><Taskbar /></div>
      <Watermark />
    </div>
  );
}
